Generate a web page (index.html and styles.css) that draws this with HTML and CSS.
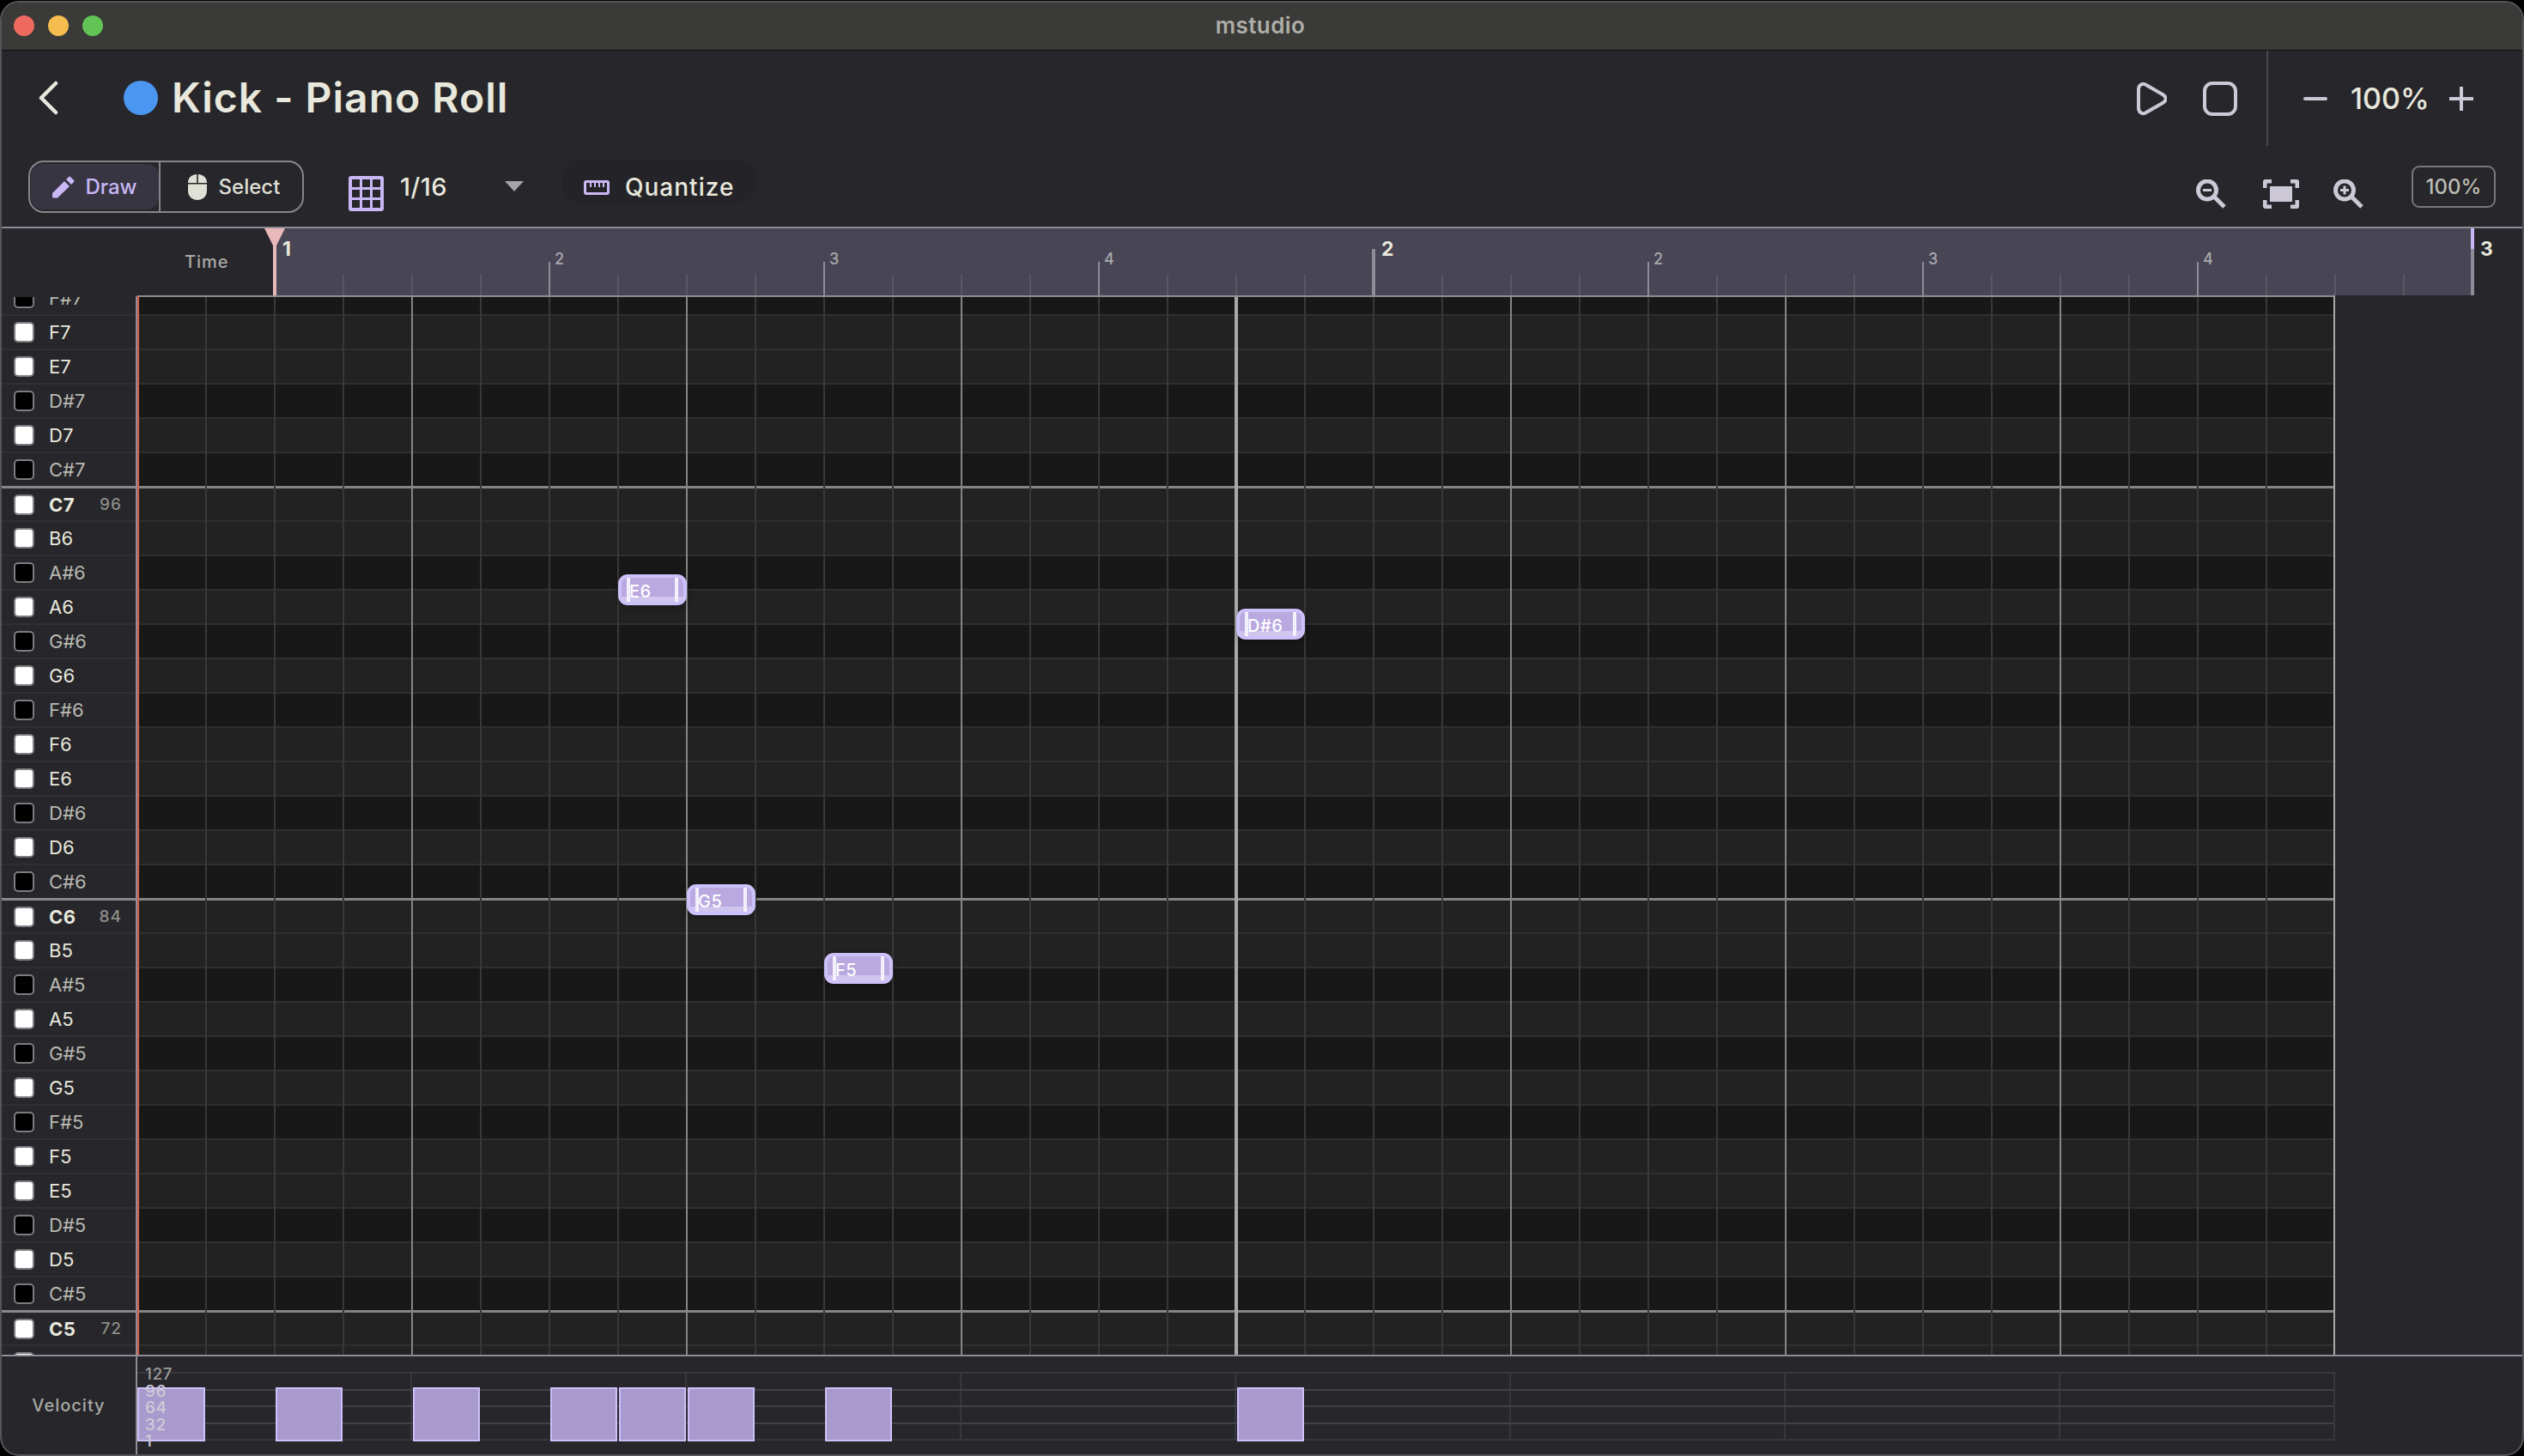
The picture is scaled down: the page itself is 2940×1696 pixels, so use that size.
FILE: index.html
```html
<!DOCTYPE html>
<html lang="en">
<head>
<meta charset="utf-8">
<title>mstudio</title>
<link rel="stylesheet" href="styles.css">
</head>
<body>
<div class="window">
  <div class="titlebar">
    <div class="lights"><span class="light red"></span><span class="light yellow"></span><span class="light green"></span></div>
    <div class="app-name">mstudio</div>
  </div>
  <header class="header">
    <svg class="back" viewBox="0 0 24 40"><path d="M21 3 4 20l17 17" /></svg>
    <span class="dot"></span>
    <h1 class="title">Kick - Piano Roll</h1>
    <div class="transport">
      <svg class="play" viewBox="0 0 36 40"><path d="M3 9C3 4 8 1 12 4L31 15C36 18 36 22 31 25L12 36C8 39 3 36 3 31Z"/></svg>
      <svg class="stop" viewBox="0 0 40 40"><rect x="2" y="2" width="36" height="36" rx="9"/></svg>
    </div>
    <div class="zoom-control">
      <span class="minus"></span>
      <span class="zoom-value">100%</span>
      <svg class="plus" viewBox="0 0 28 28"><path d="M0 14h28M14 0v28"/></svg>
    </div>
  </header>
  <div class="toolbar">
    <div class="segment">
      <button class="seg seg-on">
        <svg class="pencil" viewBox="0 0 26 26"><path d="M1 25.500Q0 25.500 0 24.500V20L14 6l6 6L6 25.500ZM16 4l3-3q1-1 2 0l4 4q1 1 0 2l-3 3Z"/></svg>Draw
      </button>
      <button class="seg seg-off">
        <svg class="mouse" viewBox="0 0 22 30"><path d="M10.200 0v10H0V10C0 4 4 .5 10.200 0zM11.800 0v10H22V10c0-6-4-9.500-10.200-10zM0 11.600h22V19c0 7-5 11-11 11S0 26 0 19z"/></svg>Select
      </button>
    </div>
    <svg class="grid-icon" viewBox="0 0 41 41"><path fill-rule="evenodd" d="M3 0h35a3 3 0 0 1 3 3v35a3 3 0 0 1-3 3H3a3 3 0 0 1-3-3V3a3 3 0 0 1 3-3zM4 4v9h9V4zM16 4v9h9V4zM28 4v9h9V4zM4 16v9h9v-9zM16 16v9h9v-9zM28 16v9h9v-9zM4 28v9h9v-9zM16 28v9h9v-9zM28 28v9h9v-9z"/></svg>
    <span class="division">1/16</span>
    <span class="caret"></span>
    <button class="quantize">
      <svg class="ruler-icon" viewBox="0 0 30 17"><path fill-rule="evenodd" d="M3 0h24a3 3 0 0 1 3 3v11a3 3 0 0 1-3 3H3a3 3 0 0 1-3-3V3a3 3 0 0 1 3-3zM3 3v11h24V3h-3v5h-2V3h-3v5h-2V3h-3v5h-2V3H9v5H7V3z"/></svg>
      Quantize
    </button>
    <div class="tools-right">
      <svg class="tool" viewBox="0 0 36 34"><circle cx="13" cy="12.500" r="10.500"/><path class="inner" d="M8 12.500h10"/><path d="M21 20l12 12"/></svg>
      <svg class="tool tool-fit" viewBox="0 0 42 34"><path class="corners" d="M2 10V4a2 2 0 0 1 2-2h6M32 2h6a2 2 0 0 1 2 2v6M40 24v6a2 2 0 0 1-2 2h-6M10 32H4a2 2 0 0 1-2-2v-6"/><rect class="solid" x="8" y="8" width="26" height="18"/></svg>
      <svg class="tool tool-in" viewBox="0 0 36 34"><circle cx="13" cy="12.500" r="10.500"/><path class="inner" d="M8 12.500h10M13 7.500v10"/><path d="M21 20l12 12"/></svg>
      <span class="zoom-badge">100%</span>
    </div>
  </div>
  <div class="ruler">
    <div class="ruler-head"><span class="time-label">Time</span></div>
    <div class="bar-cell is-bar"><span class="bar-label">1</span></div>
    <div class="bar-cell"><span class="beat-label">2</span></div>
    <div class="bar-cell"><span class="beat-label">3</span></div>
    <div class="bar-cell"><span class="beat-label">4</span></div>
    <div class="bar-cell is-bar"><span class="bar-label">2</span></div>
    <div class="bar-cell"><span class="beat-label">2</span></div>
    <div class="bar-cell"><span class="beat-label">3</span></div>
    <div class="bar-cell"><span class="beat-label">4</span></div>
    <div class="bar-end"><span class="bar-label">3</span></div>
    <div class="playhead"></div>
  </div>
  <div class="roll">
    <div class="piano">
      <div class="key-list">
        <div class="key sharp"><i></i><b>F#7</b></div>
        <div class="key"><i></i><b>F7</b></div>
        <div class="key"><i></i><b>E7</b></div>
        <div class="key sharp"><i></i><b>D#7</b></div>
        <div class="key"><i></i><b>D7</b></div>
        <div class="key sharp"><i></i><b>C#7</b></div>
        <div class="key c"><i></i><b>C7</b><em>96</em></div>
        <div class="key"><i></i><b>B6</b></div>
        <div class="key sharp"><i></i><b>A#6</b></div>
        <div class="key"><i></i><b>A6</b></div>
        <div class="key sharp"><i></i><b>G#6</b></div>
        <div class="key"><i></i><b>G6</b></div>
        <div class="key sharp"><i></i><b>F#6</b></div>
        <div class="key"><i></i><b>F6</b></div>
        <div class="key"><i></i><b>E6</b></div>
        <div class="key sharp"><i></i><b>D#6</b></div>
        <div class="key"><i></i><b>D6</b></div>
        <div class="key sharp"><i></i><b>C#6</b></div>
        <div class="key c"><i></i><b>C6</b><em>84</em></div>
        <div class="key"><i></i><b>B5</b></div>
        <div class="key sharp"><i></i><b>A#5</b></div>
        <div class="key"><i></i><b>A5</b></div>
        <div class="key sharp"><i></i><b>G#5</b></div>
        <div class="key"><i></i><b>G5</b></div>
        <div class="key sharp"><i></i><b>F#5</b></div>
        <div class="key"><i></i><b>F5</b></div>
        <div class="key"><i></i><b>E5</b></div>
        <div class="key sharp"><i></i><b>D#5</b></div>
        <div class="key"><i></i><b>D5</b></div>
        <div class="key sharp"><i></i><b>C#5</b></div>
        <div class="key c"><i></i><b>C5</b><em>72</em></div>
        <div class="key"><i></i><b>B4</b></div>
      </div>
    </div>
    <div class="grid">
      <div class="lanes">
        <div class="lane dark"></div><div class="lane"></div><div class="lane"></div><div class="lane dark"></div>
        <div class="lane"></div><div class="lane dark"></div><div class="lane c"></div><div class="lane"></div>
        <div class="lane dark"></div><div class="lane"></div><div class="lane dark"></div><div class="lane"></div>
        <div class="lane dark"></div><div class="lane"></div><div class="lane"></div><div class="lane dark"></div>
        <div class="lane"></div><div class="lane dark"></div><div class="lane c"></div><div class="lane"></div>
        <div class="lane dark"></div><div class="lane"></div><div class="lane dark"></div><div class="lane"></div>
        <div class="lane dark"></div><div class="lane"></div><div class="lane"></div><div class="lane dark"></div>
        <div class="lane"></div><div class="lane dark"></div><div class="lane c"></div><div class="lane"></div>
      </div>
      <div class="vlines"></div>
      <div class="note note-a"><span>E6</span></div>
      <div class="note note-b"><span>D#6</span></div>
      <div class="note note-c"><span>G5</span></div>
      <div class="note note-d"><span>F5</span></div>
    </div>
  </div>
  <div class="velocity">
    <div class="vel-label">Velocity</div>
    <div class="vel-area">
      <div class="vel-chart">
        <div class="vel-line"></div><div class="vel-line"></div><div class="vel-line"></div><div class="vel-line"></div>
        <div class="vel-bars">
          <span class="vbar col-1"></span><span class="vbar col-3"></span><span class="vbar col-5"></span><span class="vbar col-7"></span>
          <span class="vbar col-8"></span><span class="vbar col-9"></span><span class="vbar col-11"></span><span class="vbar col-17"></span>
        </div>
        <div class="vel-scale"><span>127</span><span class="on-bar">96</span><span class="on-bar">64</span><span class="on-bar">32</span><span class="on-bar">1</span></div>
      </div>
    </div>
  </div>
</div>
</body>
</html>
```
FILE: styles.css
```css
* { box-sizing: border-box; }
html, body { margin: 0; height: 100%; background: #000; }
body { padding-top: 1px; font-family: Inter, "Liberation Sans", sans-serif; color: #e8e8dc; overflow: hidden; }
button { font: inherit; color: inherit; background: none; border: 0; padding: 0; }

.window { height: 1695px; width: 2940px; border: 2px solid #55555a; border-radius: 22px; background: #26262b; overflow: hidden; display: flex; flex-direction: column; }

.titlebar { height: 56px; flex: none; position: relative; background: #3a3a38; border-bottom: 1px solid #0e0e0e; display: flex; align-items: center; justify-content: center; }
.lights { position: absolute; left: 14px; top: 15px; display: flex; gap: 16px; }
.light { width: 24px; height: 24px; border-radius: 50%; }
.red { background: #ee6a5f; }
.yellow { background: #f5bd4f; }
.green { background: #61c454; }
.app-name { font-size: 26px; font-weight: 600; letter-spacing: .4px; color: #aeaea8; margin-left: -4px; margin-top: -2px; }

.header { height: 111px; flex: none; display: flex; align-items: center; position: relative; }
.back { width: 24px; height: 40px; margin-left: 42px; margin-top: -1px; fill: none; stroke: #e8e8dc; stroke-width: 4.5; stroke-linecap: round; stroke-linejoin: round; }
.dot { width: 40px; height: 40px; border-radius: 50%; background: #4a96f0; margin-left: 76px; margin-top: -1px; }
.title { margin: -2px 0 0 16px; font-size: 48px; line-height: 1; font-weight: 600; letter-spacing: 1px; color: #e8e8dc; }
.transport { margin-left: auto; display: flex; align-items: center; gap: 42px; padding-right: 34px; height: 100%; border-right: 2px solid #47474c; }
.play { width: 36px; height: 40px; fill: none; stroke: #cdc8d6; stroke-width: 4; }
.stop { width: 40px; height: 40px; fill: none; stroke: #cdc8d6; stroke-width: 4; }
.zoom-control { width: 296px; display: flex; align-items: center; padding-left: 41px; }
.minus { width: 28px; height: 4px; border-radius: 2px; background: #cdc8d6; }
.zoom-value { font-size: 34px; font-weight: 500; margin-left: 27px; width: 115px; }
.plus { width: 28px; height: 28px; stroke: #cdc8d6; stroke-width: 4; stroke-linecap: round; }

.toolbar { height: 94px; flex: none; display: flex; align-items: center; position: relative; padding-left: 31px; }
.segment { display: flex; width: 321px; height: 61px; padding: 2px 0 2px 1px; border: 2px solid #85858a; border-radius: 18px; font-size: 24px; font-weight: 500; letter-spacing: 1px; }
.seg { display: flex; align-items: center; justify-content: center; }
.seg-on { width: 149px; gap: 12px; background: #383543; color: #c9b8f5; border-radius: 14px; padding-top: 1px; }
.seg-off { flex: 1; gap: 14px; margin: -2px 0; padding: 1px 0 0 6px; color: #dfdfd4; border-left: 2px solid #85858a; }
.pencil { width: 26px; height: 26px; fill: #c9b8f5; }
.mouse { width: 22px; height: 30px; fill: #e0e1d6; }
.grid-icon { width: 41px; height: 41px; flex: none; margin: 17px 0 0 52px; fill: #c9b8f5; }
.division { font-size: 29px; font-weight: 500; margin-left: 19px; width: 122px; letter-spacing: .5px; }
.caret { width: 0; height: 0; border-left: 11px solid transparent; border-right: 11px solid transparent; border-top: 12px solid #a5a5a8; }
.quantize { display: flex; align-items: center; gap: 18px; height: 50px; padding: 14px 25px 0 25px; margin-left: 45px; margin-top: -12px; font-size: 28px; font-weight: 500; letter-spacing: 1px; border-radius: 20px; background: #242428; }
.ruler-icon { width: 30px; height: 17px; fill: #c9b8f5; }
.tools-right { margin-left: auto; display: flex; align-items: center; padding-right: 31px; }
.tool { width: 36px; height: 34px; margin: 17px 42px 0 0; fill: none; stroke: #cdc8d6; stroke-width: 5; }
.tool .inner { stroke-width: 3; }
.tool-fit { width: 42px; margin-right: 40px; }
.tool-in { margin-right: 55px; }
.tool-fit .solid { fill: #cdc8d6; stroke: none; }
.zoom-badge { width: 98px; height: 49px; display: flex; align-items: center; justify-content: center; border: 2px solid #77777c; border-radius: 9px; font-size: 24px; font-weight: 500; color: #bdbdb4; }

.ruler { height: 80px; flex: none; display: flex; position: relative; border-top: 2px solid #8f8c98; }
.ruler-head { width: 318px; flex: none; position: relative; }
.time-label { position: absolute; left: 213px; top: 27px; font-size: 20px; font-weight: 500; letter-spacing: 1px; color: #aaaaa4; }
.bar-cell { width: 320px; flex: none; position: relative; background-color: #484554; background-image: linear-gradient(#5a5864, #5a5864), linear-gradient(#5a5864, #5a5864), linear-gradient(#5a5864, #5a5864); background-size: 2px 24px; background-repeat: no-repeat; background-position: 79px 54px, 159px 54px, 239px 54px; }
.bar-cell::before { content: ""; position: absolute; left: -1px; bottom: 0; width: 2px; height: 39px; background: #8f8c98; }
.bar-cell.is-bar::before { width: 4px; height: 54px; left: -2px; }
.beat-label { position: absolute; left: 6px; top: 25px; font-size: 18px; font-weight: 500; color: #aaa9ae; }
.bar-label { position: absolute; left: 9px; top: 10px; font-size: 23px; line-height: 28px; font-weight: 700; color: #e8e8dc; }
.bar-end { flex: 1; position: relative; }
.bar-end::before { content: ""; position: absolute; left: -2px; top: 0; bottom: 0; width: 4px; background: linear-gradient(#c9b8f5 0 24px, #8f8c98 24px); }
.playhead { position: absolute; left: 316px; top: 0; bottom: 0; width: 4px; background: #e9b9b9; z-index: 2; }
.playhead::before { content: ""; position: absolute; left: -10px; top: 0; border-left: 12px solid transparent; border-right: 12px solid transparent; border-top: 24px solid #e9b9b9; }

.roll { height: 1234px; flex: none; display: flex; }
.piano { width: 158px; flex: none; overflow: hidden; background: #26262b; border-top: 2px solid #26262b; border-right: 2px solid #8f8c98; }
.key-list { margin-top: -20px; }
.key { height: 40px; display: flex; align-items: center; border-top: 2px solid #2f2f35; padding: 0 16px 0 14px; }
.key i { width: 24px; height: 24px; flex: none; background: #fff; border: 2px solid #7c7c82; border-radius: 5px; }
.key b { font-size: 22px; font-weight: 400; margin-left: 17px; color: #e8e8dc; }
.key em { margin-left: auto; font-style: normal; font-size: 19px; font-weight: 500; letter-spacing: 1px; color: #8d8d88; }
.key.sharp i { background: #000; }
.key.sharp b { color: #b9b9b1; }
.key.c { border-top: 3px solid #88888c; }
.key.c b { font-weight: 700; letter-spacing: .5px; }

.grid { width: 2560px; flex: none; position: relative; overflow: hidden; border-top: 2px solid #8f8c98; border-right: 2px solid #aaaaaa; border-left: 2px solid #d85a48; }
.lanes { margin-top: -20px; }
.lane { height: 40px; background: #222222; border-top: 2px solid #2f2f2f; }
.lane.dark { background: #181818; }
.lane.c { border-top: 3px solid #858585; }
.vlines { position: absolute; inset: 0; background-image:
  linear-gradient(#a8a8a8, #a8a8a8),
  repeating-linear-gradient(90deg, transparent 0 317px, #858585 317px 319px, transparent 319px 320px),
  repeating-linear-gradient(90deg, transparent 0 77px, #383838 77px 79px, transparent 79px 80px);
  background-size: 4px 100%, 100% 100%, 100% 100%;
  background-position: 1276px 0, 0 0, 0 0;
  background-repeat: no-repeat;
}
.note { position: absolute; width: 80px; height: 36px; border: 4px solid #cdc1fa; border-radius: 11px; background: linear-gradient(#b9a9e0 0 22px, #cfc5ee 22px); box-shadow: 0 2px 8px rgba(0, 0, 0, .3); }
.note::before, .note::after { content: ""; position: absolute; top: 0; width: 4px; height: 28px; background: #f4f0fb; }
.note::before { left: 6px; }
.note::after { right: 6px; }
.note span { position: absolute; left: 9px; top: 4px; font-size: 20px; line-height: 24px; font-weight: 500; letter-spacing: .5px; color: #fff; }
.note-a { left: 558px; top: 323px; }
.note-b { left: 1278px; top: 363px; }
.note-c { left: 638px; top: 684px; }
.note-d { left: 798px; top: 764px; }

.velocity { flex: 1; display: flex; border-top: 2px solid #8f8c98; min-height: 0; }
.vel-label { width: 158px; flex: none; display: flex; align-items: center; justify-content: center; border-right: 2px solid #8f8c98; font-size: 20px; font-weight: 500; letter-spacing: 1px; color: #a9a9a3; }
.vel-area { padding-top: 18px; }
.vel-chart { width: 2560px; height: 80px; position: relative; border: 2px solid #37373d; border-left: 0; display: flex; flex-direction: column; background-image: repeating-linear-gradient(90deg, transparent 0 318px, #37373d 318px 320px); }
.vel-line { flex: 1; border-bottom: 2px solid #404046; }
.vel-line:nth-child(4) { border-bottom: 0; }
.vel-bars { position: absolute; left: 0; right: 0; top: 16px; height: 63px; display: grid; grid-template-columns: repeat(32, 80px); }
.vbar { margin: 0 1px; background: #a99ace; border: 2px solid #cdbff8; }
.col-1 { grid-column: 1; margin-left: 0; }
.col-3 { grid-column: 3; }
.col-5 { grid-column: 5; }
.col-7 { grid-column: 7; }
.col-8 { grid-column: 8; }
.col-9 { grid-column: 9; }
.col-11 { grid-column: 11; }
.col-17 { grid-column: 17; }
.vel-scale { position: absolute; left: 9px; top: -9px; display: flex; flex-direction: column; font-size: 19px; line-height: 19.5px; font-weight: 500; color: #9a9a98; letter-spacing: .5px; }
.vel-scale .on-bar { color: #cfccd8; }
```
